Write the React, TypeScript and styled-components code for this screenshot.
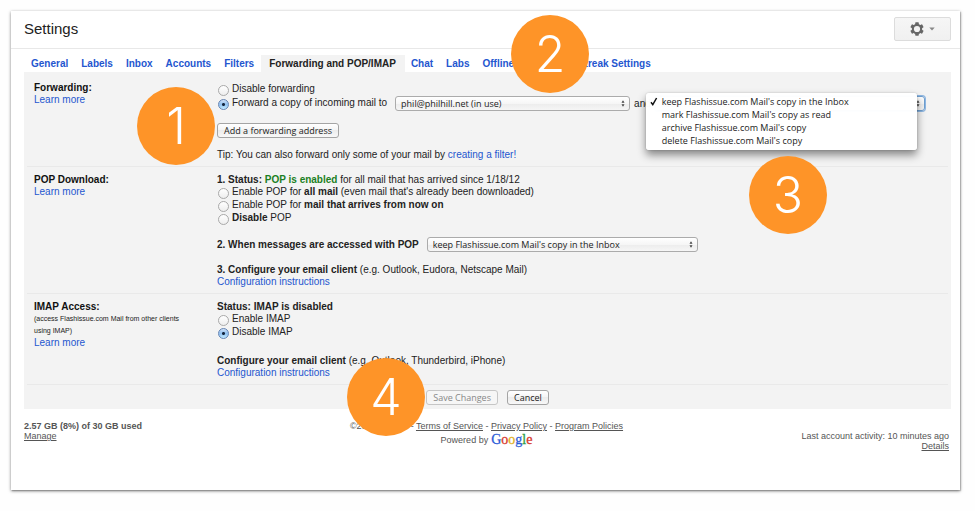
import React, { useState } from "react";
import styled, { createGlobalStyle, css } from "styled-components";

const GlobalStyle = createGlobalStyle`
  * { box-sizing: border-box; }
  body {
    margin: 0;
    background: #fefefe;
    color: #222;
    font-family: "Liberation Sans", Arial, sans-serif;
    font-size: 10px;
    line-height: 12px;
  }
`;

const controlFont = css`
  font-family: "Lucida Grande", "Open Sans", sans-serif;
  font-size: 9px;
  font-weight: 500;
  line-height: 13px;
`;

const Page = styled.div`
  position: relative;
  padding: 11px 15px 20px 11px;
`;

const Panel = styled.main`
  padding-bottom: 39px;
  background: #fff;
  box-shadow: 0 1px 3px rgba(0, 0, 0, 0.5), 1px 1px 1px rgba(0, 0, 0, 0.15);
`;

const Header = styled.header`
  display: flex;
  align-items: center;
  justify-content: space-between;
  height: 38px;
  padding: 0 9px 2px 13px;
  border-bottom: 1px solid #e8e8e8;
`;

const Title = styled.h1`
  margin: 0;
  font-size: 15px;
  font-weight: 400;
  line-height: 20px;
`;

const GearButton = styled.button`
  display: flex;
  align-items: center;
  justify-content: center;
  gap: 5px;
  width: 57px;
  height: 24px;
  padding: 0;
  border: 1px solid #dcdcdc;
  border-radius: 2px;
  background: linear-gradient(#f6f6f6, #f0f0f0);
`;

const Body = styled.div`
  padding: 6px 9px 0 13px;
`;

const Tabs = styled.nav`
  display: flex;
  padding-left: 1px;
`;

const Tab = styled.a<{ $active?: boolean }>`
  padding: ${(p) => (p.$active ? "3px 9px 2px 8px" : "3px 7px 2px 6px")};
  background: ${(p) => (p.$active ? "#f3f3f3" : "transparent")};
  color: ${(p) => (p.$active ? "#222" : "#2456cf")};
  font-weight: 700;
  text-decoration: none;
`;

const Settings = styled.form`
  padding: 0 3px;
  background: #f3f3f3;
`;

const Section = styled.section`
  display: grid;
  grid-template-columns: 183px 1fr;
  padding: 7px 0 5px 7px;
  border-bottom: 1px solid #e9e9e9;
`;

const SectionTitle = styled.h2<{ $space?: number }>`
  margin: ${(p) => p.$space ?? 0}px 0 0;
  color: #111;
  font-size: 10px;
  line-height: 12px;
`;

const Note = styled.p`
  width: 160px;
  margin: 0;
  font-size: 7px;
  line-height: 12px;
`;

const Link = styled.a`
  color: #2456cf;
  text-decoration: none;
`;

const Line = styled.p<{ $space?: number }>`
  margin: ${(p) => p.$space ?? 0}px 0 0;
`;

const ControlRow = styled.div<{ $space?: number; $gap?: number }>`
  display: flex;
  align-items: center;
  gap: ${(p) => p.$gap ?? 4}px;
  margin-top: ${(p) => p.$space ?? 0}px;
`;

const Choice = styled.label`
  display: flex;
  align-items: flex-start;
  gap: 3px;
  height: 13px;
  padding-right: 4px;
  white-space: nowrap;
`;

const Radio = styled.input`
  appearance: none;
  flex: none;
  width: 11px;
  height: 11px;
  margin: 2px 0 0 1px;
  border: 1px solid #a9a9a9;
  border-radius: 50%;
  background: linear-gradient(#fff, #eee);
  &:checked {
    border-color: #6484b4;
    background: radial-gradient(circle, #14243c 0 1px, transparent 2px),
      linear-gradient(#cfe0f6, #8fc0f0 50%, #c4ebff);
  }
`;

const Button = styled.button`
  ${controlFont}
  height: 15px;
  padding: 0 6px;
  border: 1px solid #a4a4a4;
  border-radius: 3px;
  background: linear-gradient(#fff, #f4f4f4 50%, #ececec 50%, #f8f8f8);
  color: #222;
  &:disabled {
    border-color: #c6c6c6;
    background: #f6f6f6;
    color: #888;
  }
`;

const SelectFrame = styled.div<{ $width: number }>`
  position: relative;
  display: grid;
  align-items: center;
  width: ${(p) => p.$width}px;
  > select, > svg { grid-area: 1 / 1; }
  > svg { justify-self: end; margin-right: 5px; pointer-events: none; }
`;

const Select = styled.select<{ $focused?: boolean }>`
  ${controlFont}
  appearance: none;
  width: 100%;
  height: 15px;
  padding: 0 14px 0 5px;
  border: 1px solid #ababab;
  border-radius: 3px;
  outline: none;
  background: linear-gradient(#fff, #f6f6f6 50%, #ececec 50%, #f6f6f6);
  color: #222;
  ${(p) =>
    p.$focused &&
    css`
      border-color: #6f9fd0;
      box-shadow: 0 0 0 1px #8db6e2;
    `}
`;

const Menu = styled.ul`
  ${controlFont}
  position: absolute;
  z-index: 1;
  top: -3px;
  left: -9px;
  width: 271px;
  margin: 0;
  padding: 2px 0 3px;
  border-radius: 3px;
  background: rgba(255, 255, 255, 0.98);
  box-shadow: 0 5px 9px rgba(0, 0, 0, 0.45), 0 0 2px rgba(0, 0, 0, 0.2);
  list-style: none;
`;

const MenuItem = styled.li`
  display: flex;
  align-items: center;
  height: 13px;
  padding-left: 4px;
  white-space: nowrap;
`;

const CheckSlot = styled.span`
  display: flex;
  width: 12px;
`;

const Enabled = styled.b`
  color: #1b8023;
`;

const Actions = styled.div`
  display: flex;
  justify-content: center;
  gap: 9px;
  padding: 5px 0 4px;
`;

const Footer = styled.footer`
  display: grid;
  grid-template-columns: 1fr auto 1fr;
  padding: 12px 2px 0 0;
  color: #555;
  font-size: 9px;
  line-height: 10px;
`;

const FooterSide = styled.div<{ $right?: boolean }>`
  text-align: ${(p) => (p.$right ? "right" : "left")};
  padding-top: ${(p) => (p.$right ? 10 : 0)}px;
`;

const FooterCenter = styled.div`
  text-align: center;
`;

const FooterLink = styled.a`
  color: #555;
  text-decoration: underline;
`;

const Powered = styled.div`
  display: flex;
  align-items: center;
  justify-content: center;
  gap: 3px;
`;

const Wordmark = styled.span`
  font-family: "Liberation Serif", serif;
  font-size: 14px;
  line-height: 18px;
  -webkit-text-stroke: 0.3px currentColor;
`;

const Letter = styled.span<{ $color: string }>`
  color: ${(p) => p.$color};
`;

const Badge = styled.div<{ $x: number; $y: number }>`
  position: absolute;
  z-index: 2;
  top: ${(p) => p.$y}px;
  left: ${(p) => p.$x}px;
  display: flex;
  align-items: center;
  justify-content: center;
  width: 78px;
  height: 78px;
  border-radius: 50%;
  background: #fe9428;
  color: #fff;
  font-family: Inter, "Helvetica Neue", sans-serif;
  font-size: 50px;
  font-weight: 300;
  line-height: 78px;
`;

const TABS = ["General", "Labels", "Inbox", "Accounts", "Filters", "Forwarding and POP/IMAP", "Chat", "Labs", "Offline", "Themes", "Streak Settings"];

const COPY_ACTIONS = [
  "keep Flashissue.com Mail's copy in the Inbox",
  "mark Flashissue.com Mail's copy as read",
  "archive Flashissue.com Mail's copy",
  "delete Flashissue.com Mail's copy",
];

const LOGO: [string, string][] = [
  ["G", "#2a5bd7"], ["o", "#d8382c"], ["o", "#e2b01c"], ["g", "#2a5bd7"], ["l", "#2f9e44"], ["e", "#d8382c"],
];

const STEPS = [
  { n: 1, x: 137, y: 87 },
  { n: 2, x: 511, y: 15 },
  { n: 3, x: 749, y: 156 },
  { n: 4, x: 347, y: 358 },
];

const GearIcon = () => (
  <svg width="14" height="14" viewBox="0 0 14 14" aria-hidden="true">
    <g fill="#666">
      {[0, 60, 120].map((a) => (
        <rect key={a} x="5.2" y="0.3" width="3.6" height="13.4" rx="0.6" transform={`rotate(${a} 7 7)`} />
      ))}
      <circle cx="7" cy="7" r="5.2" />
    </g>
    <circle cx="7" cy="7" r="3.1" fill="#f3f3f3" />
  </svg>
);

const CaretIcon = () => (
  <svg width="6" height="4" viewBox="0 0 6 4" aria-hidden="true">
    <path d="M0.3 0.5h5.4L3 3.4z" fill="#888" />
  </svg>
);

const StepperIcon = () => (
  <svg width="4" height="7" viewBox="0 0 4 7" aria-hidden="true">
    <path d="M2 0.3l1.5 2.4H0.5zM2 6.7L0.5 4.3h3z" fill="#444" />
  </svg>
);

const CheckIcon = () => (
  <svg width="8" height="9" viewBox="0 0 8 9" aria-hidden="true">
    <path d="M1 5.2L2.8 7.6L6.6 1" fill="none" stroke="#111" strokeWidth="1.5" />
  </svg>
);

type PickerProps = { label: string; options: string[]; width: number; focused?: boolean; children?: React.ReactNode };

const Picker = ({ label, options, width, focused, children }: PickerProps) => (
  <SelectFrame $width={width}>
    <Select aria-label={label} $focused={focused}>
      {options.map((o) => (
        <option key={o}>{o}</option>
      ))}
    </Select>
    <StepperIcon />
    {children}
  </SelectFrame>
);

export default function App() {
  const [forwarding, setForwarding] = useState("forward");
  const [pop, setPop] = useState("");
  const [imap, setImap] = useState("disable");

  return (
    <>
      <GlobalStyle />
      <Page>
        <Panel>
          <Header>
            <Title>Settings</Title>
            <GearButton type="button" aria-label="Settings menu">
              <GearIcon />
              <CaretIcon />
            </GearButton>
          </Header>
          <Body>
            <Tabs>
              {TABS.map((t) => (
                <Tab key={t} href="#" $active={t.startsWith("Forwarding")}>{t}</Tab>
              ))}
            </Tabs>
            <Settings>
              <Section>
                <div>
                  <SectionTitle $space={3}>Forwarding:</SectionTitle>
                  <Link href="#">Learn more</Link>
                </div>
                <div>
                  <Line $space={4} as="div">
                    <Choice>
                      <Radio type="radio" name="fwd" checked={forwarding === "off"} onChange={() => setForwarding("off")} />
                      Disable forwarding
                    </Choice>
                  </Line>
                  <ControlRow>
                    <Choice>
                      <Radio type="radio" name="fwd" checked={forwarding === "forward"} onChange={() => setForwarding("forward")} />
                      Forward a copy of incoming mail to
                    </Choice>
                    <Picker label="Forwarding address" options={["phil@philhill.net (in use)"]} width={235} />
                    and
                    <Picker label="Action on forwarded mail" options={COPY_ACTIONS} width={270} focused>
                      <Menu role="listbox" aria-label="Action on forwarded mail">
                        {COPY_ACTIONS.map((o, i) => (
                          <MenuItem key={o} role="option" aria-selected={i === 0}>
                            <CheckSlot>{i === 0 && <CheckIcon />}</CheckSlot>
                            {o}
                          </MenuItem>
                        ))}
                      </Menu>
                    </Picker>
                  </ControlRow>
                  <ControlRow $space={12}>
                    <Button type="button">Add a forwarding address</Button>
                  </ControlRow>
                  <Line $space={11}>
                    Tip: You can also forward only some of your mail by <Link href="#">creating a filter!</Link>
                  </Line>
                </div>
              </Section>

              <Section>
                <div>
                  <SectionTitle>POP Download:</SectionTitle>
                  <Link href="#">Learn more</Link>
                </div>
                <div>
                  <Line>
                    <b>1. Status: <Enabled>POP is enabled</Enabled></b> for all mail that has arrived since 1/18/12
                  </Line>
                  <Choice>
                    <Radio type="radio" name="pop" checked={pop === "all"} onChange={() => setPop("all")} />
                    <span>Enable POP for <b>all mail</b> (even mail that's already been downloaded)</span>
                  </Choice>
                  <Choice>
                    <Radio type="radio" name="pop" checked={pop === "new"} onChange={() => setPop("new")} />
                    <span>Enable POP for <b>mail that arrives from now on</b></span>
                  </Choice>
                  <Choice>
                    <Radio type="radio" name="pop" checked={pop === "off"} onChange={() => setPop("off")} />
                    <span><b>Disable</b> POP</span>
                  </Choice>
                  <ControlRow $space={12} $gap={8}>
                    <b>2. When messages are accessed with POP</b>
                    <Picker label="When messages are accessed with POP" options={COPY_ACTIONS} width={271} />
                  </ControlRow>
                  <Line $space={12}>
                    <b>3. Configure your email client</b> (e.g. Outlook, Eudora, Netscape Mail)
                  </Line>
                  <Link href="#">Configuration instructions</Link>
                </div>
              </Section>

              <Section>
                <div>
                  <SectionTitle>IMAP Access:</SectionTitle>
                  <Note>(access Flashissue.com Mail from other clients using IMAP)</Note>
                  <Link href="#">Learn more</Link>
                </div>
                <div>
                  <Line><b>Status: IMAP is disabled</b></Line>
                  <Choice>
                    <Radio type="radio" name="imap" checked={imap === "enable"} onChange={() => setImap("enable")} />
                    Enable IMAP
                  </Choice>
                  <Choice>
                    <Radio type="radio" name="imap" checked={imap === "disable"} onChange={() => setImap("disable")} />
                    Disable IMAP
                  </Choice>
                  <Line $space={16}>
                    <b>Configure your email client</b> (e.g. Outlook, Thunderbird, iPhone)
                  </Line>
                  <Link href="#">Configuration instructions</Link>
                </div>
              </Section>

              <Actions>
                <Button type="submit" disabled>Save Changes</Button>
                <Button type="button">Cancel</Button>
              </Actions>
            </Settings>

            <Footer>
              <FooterSide>
                <b>2.57 GB (8%) of 30 GB used</b>
                <br />
                <FooterLink href="#">Manage</FooterLink>
              </FooterSide>
              <FooterCenter>
                ©2013 Google - <FooterLink href="#">Terms of Service</FooterLink> - <FooterLink href="#">Privacy Policy</FooterLink> - <FooterLink href="#">Program Policies</FooterLink>
                <Powered>
                  Powered by
                  <Wordmark>
                    {LOGO.map(([c, color], i) => (
                      <Letter key={i} $color={color}>{c}</Letter>
                    ))}
                  </Wordmark>
                </Powered>
              </FooterCenter>
              <FooterSide $right>
                Last account activity: 10 minutes ago
                <br />
                <FooterLink href="#">Details</FooterLink>
              </FooterSide>
            </Footer>
          </Body>
        </Panel>
        {STEPS.map((s) => (
          <Badge key={s.n} $x={s.x} $y={s.y}>{s.n}</Badge>
        ))}
      </Page>
    </>
  );
}
